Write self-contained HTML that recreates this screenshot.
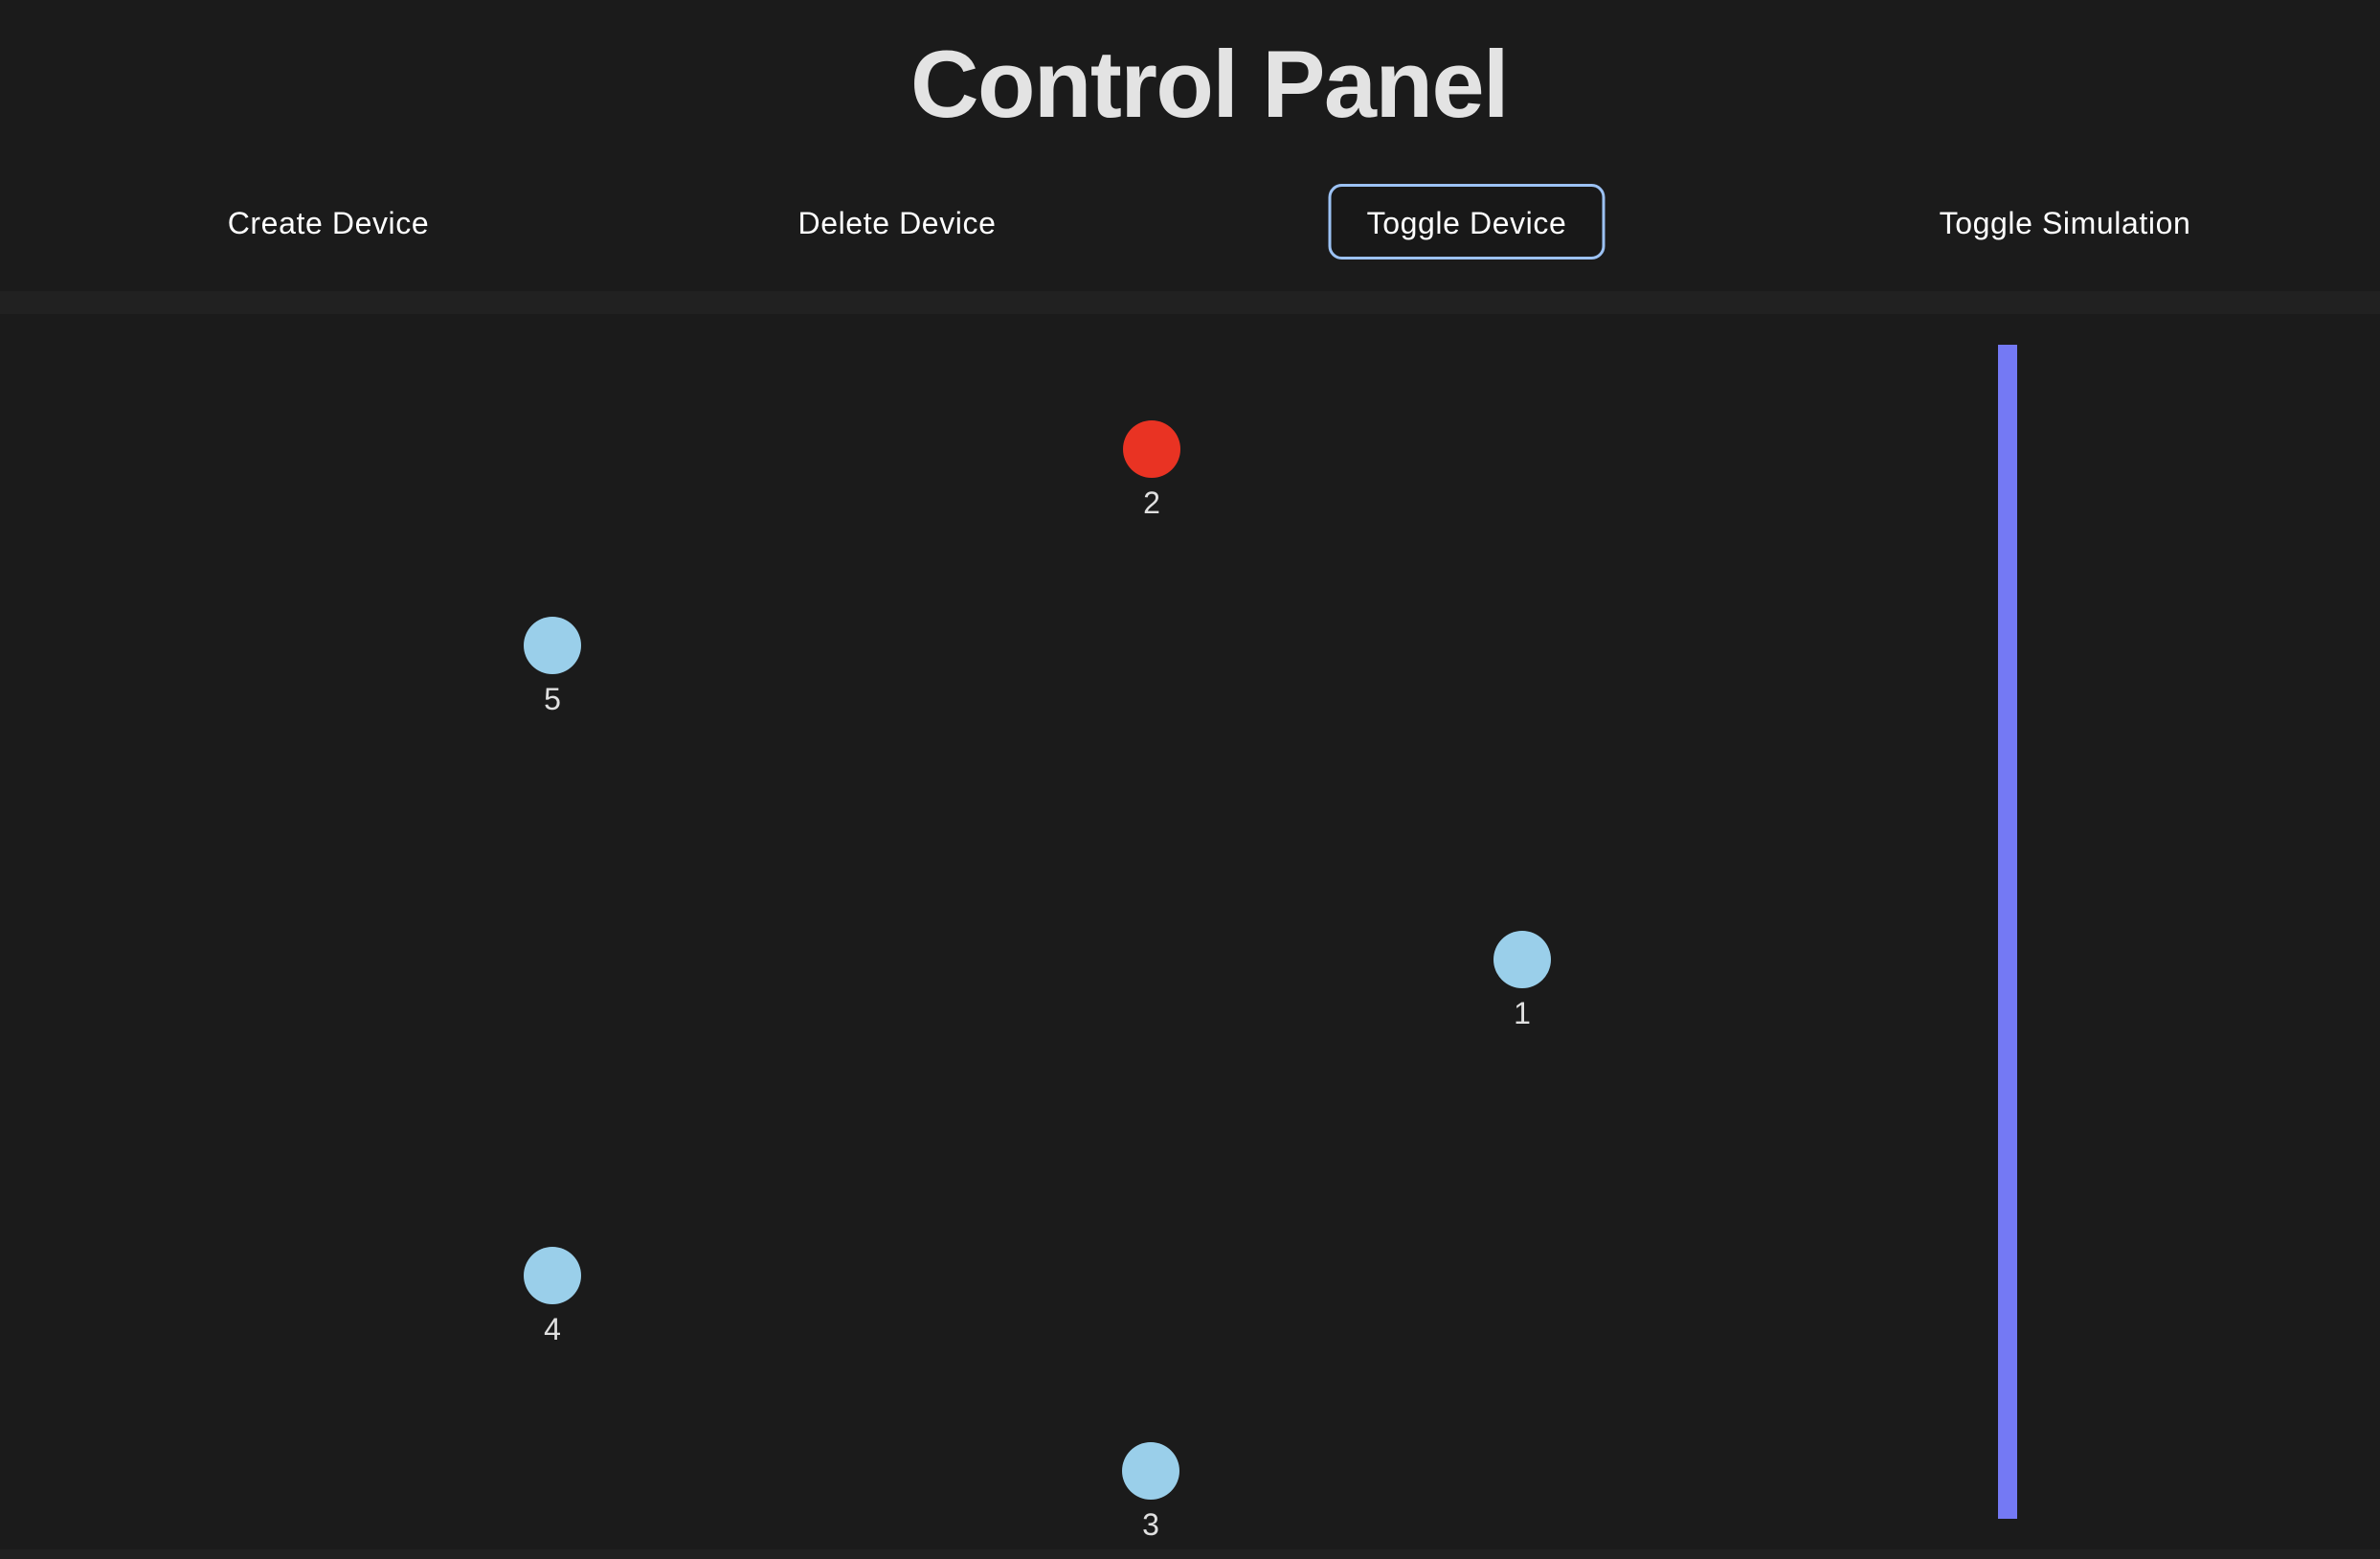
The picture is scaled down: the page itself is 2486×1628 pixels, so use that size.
<!DOCTYPE html>
<html><head><meta charset="utf-8"><style>
html,body{margin:0;padding:0;}
body{width:2486px;height:1628px;background:#1b1b1b;position:relative;overflow:hidden;font-family:"Liberation Sans",sans-serif;}
h1{position:absolute;left:0;width:2526px;top:28px;margin:0;text-align:center;font-size:99px;font-weight:bold;color:#e3e3e3;letter-spacing:-1.5px;line-height:120px;}
.btn{position:absolute;top:194px;height:79px;line-height:79px;color:#fff;font-size:32px;text-align:center;transform:translateX(-50%);white-space:nowrap;letter-spacing:0.6px;}
.sel{top:192px;border:3px solid #9cc2f4;border-radius:14px;box-sizing:border-box;width:289px;background:#181818;line-height:77px;}
.strip{position:absolute;left:0;width:2486px;background:#212121;}
.bar{position:absolute;left:2087px;top:360px;width:20px;height:1226px;background:#7479f4;}
.c{position:absolute;width:60px;height:60px;border-radius:50%;transform:translate(-30px,-30px);background:#9acfea;}
.r{background:#e93323;}
.l{position:absolute;color:#e0e0e0;font-size:32px;transform:translate(-50%,-50%);line-height:32px;}
</style></head><body>
<h1>Control Panel</h1>
<div class="btn" style="left:343px">Create Device</div>
<div class="btn" style="left:937px">Delete Device</div>
<div class="btn sel" style="left:1532px">Toggle Device</div>
<div class="btn" style="left:2157px">Toggle Simulation</div>
<div class="strip" style="top:304px;height:24px"></div>
<div class="strip" style="top:1618px;height:10px"></div>
<div class="bar"></div>
<div class="c r" style="left:1203px;top:469px"></div><div class="l" style="left:1203px;top:525px">2</div>
<div class="c" style="left:577px;top:674px"></div><div class="l" style="left:577px;top:730px">5</div>
<div class="c" style="left:1590px;top:1002px"></div><div class="l" style="left:1590px;top:1058px">1</div>
<div class="c" style="left:577px;top:1332px"></div><div class="l" style="left:577px;top:1388px">4</div>
<div class="c" style="left:1202px;top:1536px"></div><div class="l" style="left:1202px;top:1592px">3</div>
</body></html>
